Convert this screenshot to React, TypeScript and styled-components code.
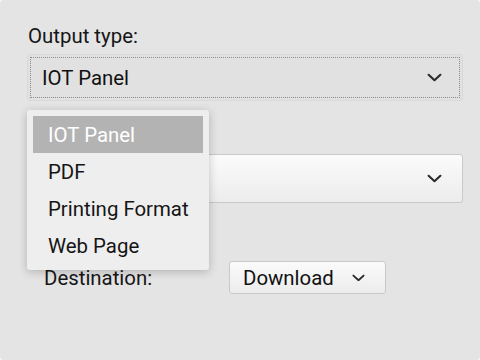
import React from 'react';
import styled, { createGlobalStyle } from 'styled-components';

const GlobalStyle = createGlobalStyle`
  html, body {
    margin: 0;
    padding: 0;
    background: #ffffff;
  }
  body {
    font-family: Roboto, "Liberation Sans", sans-serif;
    color: #1a1a1a;
  }
`;

const Panel = styled.div`
  width: 480px;
  height: 360px;
  box-sizing: border-box;
  background: #e4e4e4;
  border-radius: 3px;
  padding: 24px 17px 0 27px;
  position: relative;
`;

const Label = styled.div<{ $indent?: number }>`
  font-size: 20.4px;
  line-height: 24px;
  padding-left: ${(p) => p.$indent ?? 1}px;
  color: #161616;
`;

const SelectBox = styled.div<{ $focused?: boolean; $h?: number }>`
  height: ${(p) => p.$h ?? 47}px;
  box-sizing: border-box;
  border-radius: 3px;
  position: relative;
  display: flex;
  align-items: center;
  justify-content: space-between;
  padding: 0 20px 0 14px;
  font-size: 20.4px;
  color: #111;
  background: ${(p) =>
    p.$focused ? '#e1e1e1' : 'linear-gradient(#fbfbfb, #ececec)'};
  border: 1px solid ${(p) => (p.$focused ? '#d9d9d9' : '#c9c9c9')};
  outline: ${(p) => (p.$focused ? '1px dotted #8a8a8a' : 'none')};
  outline-offset: -4px;
`;

const FieldStack = styled.div`
  display: flex;
  flex-direction: column;
  gap: 6px;
`;

const Chevron = ({ size = 15 }: { size?: number }) => (
  <svg width={size} height={size * 0.6} viewBox="0 0 14 8" fill="none">
    <path d="M1.5 1.5 L7 6.5 L12.5 1.5" stroke="#2b2b2b" strokeWidth="2" strokeLinecap="round" strokeLinejoin="round" />
  </svg>
);

const Menu = styled.ul`
  position: absolute;
  left: 27px;
  top: 110px;
  width: 182px;
  margin: 0;
  padding: 6px;
  box-sizing: border-box;
  list-style: none;
  background: #eeeeee;
  border-radius: 3px;
  box-shadow: 0 2px 10px rgba(0, 0, 0, 0.22);
  z-index: 5;
`;

const MenuItem = styled.li<{ $active?: boolean }>`
  height: 37px;
  display: flex;
  align-items: center;
  padding-left: 15px;
  font-size: 20.4px;
  color: ${(p) => (p.$active ? '#ffffff' : '#151515')};
  background: ${(p) => (p.$active ? '#b3b3b3' : 'transparent')};
  white-space: nowrap;
`;

const DestRow = styled.div`
  display: flex;
  align-items: center;
  margin-top: 59px;
  padding-left: 17px;
`;

const DestLabel = styled.div`
  font-size: 20.4px;
  width: 185px;
  color: #161616;
`;

const SmallSelect = styled.div`
  width: 157px;
  height: 33px;
  box-sizing: border-box;
  display: flex;
  align-items: center;
  gap: 18px;
  padding-left: 13px;
  font-size: 20.4px;
  color: #111;
  border: 1px solid #c9c9c9;
  border-radius: 3px;
  background: linear-gradient(#fbfbfb, #ececec);
`;

const options = ['IOT Panel', 'PDF', 'Printing Format', 'Web Page'];

export default function App() {
  return (
    <>
      <GlobalStyle />
      <Panel>
        <FieldStack>
          <Label>Output type:</Label>
          <SelectBox $focused>
            <span>IOT Panel</span>
            <Chevron />
          </SelectBox>
        </FieldStack>
        <SelectBox $h={49} style={{ marginTop: 53 }}>
          <span />
          <Chevron />
        </SelectBox>
        <DestRow style={{ marginTop: 58 }}>
          <DestLabel>Destination:</DestLabel>
          <SmallSelect>
            <span>Download</span>
            <Chevron size={13} />
          </SmallSelect>
        </DestRow>
        <Menu>
          {options.map((o, i) => (
            <MenuItem key={o} $active={i === 0}>
              {o}
            </MenuItem>
          ))}
        </Menu>
      </Panel>
    </>
  );
}
